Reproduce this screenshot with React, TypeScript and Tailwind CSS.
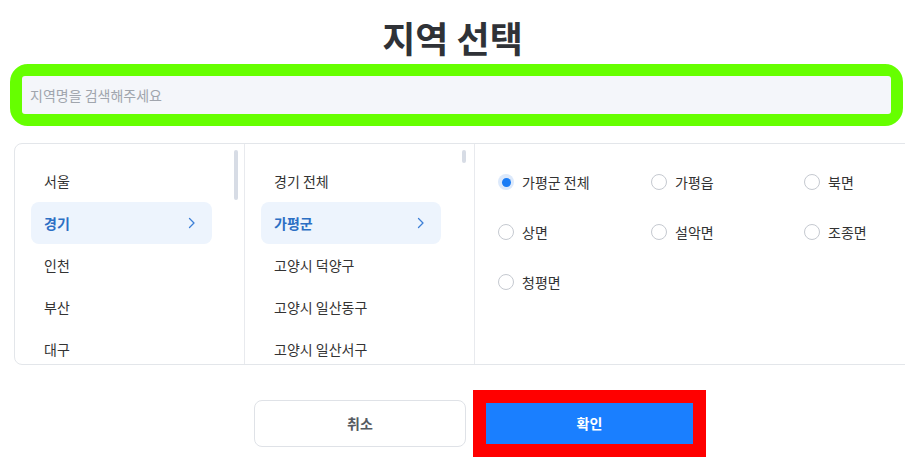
import React from "react";

const font = { fontFamily: '"Noto Sans CJK KR", "Noto Sans", sans-serif' };

function Chevron() {
  return (
    <svg width="8" height="12" viewBox="0 0 8 12" fill="none">
      <path d="M1.5 1.5L6 6L1.5 10.5" stroke="#3d7fd6" strokeWidth="1.3" strokeLinecap="round" strokeLinejoin="round" />
    </svg>
  );
}

function Radio({ checked, label }: { checked?: boolean; label: string }) {
  return (
    <div className="flex items-center gap-[8px] h-[50px]">
      {checked ? (
        <span className="w-[16px] h-[16px] rounded-full bg-[#dce9fb] flex items-center justify-center">
          <span className="w-[9px] h-[9px] rounded-full bg-[#1a7cf5]" />
        </span>
      ) : (
        <span className="w-[16px] h-[16px] rounded-full border border-[#c5c9d0] bg-white" />
      )}
      <span className="text-[14px] text-[#333]">{label}</span>
    </div>
  );
}

export default function App() {
  const col1 = ["서울", "경기", "인천", "부산", "대구"];
  const col2 = ["경기 전체", "가평군", "고양시 덕양구", "고양시 일산동구", "고양시 일산서구"];
  const radios = ["가평군 전체", "가평읍", "북면", "상면", "설악면", "조종면", "청평면"];
  return (
    <div className="w-[905px] h-[467px] bg-white overflow-hidden" style={font}>
      <div className="pt-[15px] h-[64px] text-center text-[36px] leading-[44px] font-bold text-[#2f3237]">
        지역 선택
      </div>
      <div className="ml-[10px] w-[893px] h-[62px] border-[12px] border-[#66ff00] rounded-[18px] bg-white">
        <div className="h-full bg-[#f4f6fa] rounded-[3px] flex items-center pl-[8px] text-[14px] text-[#a0a5ad]">
          지역명을 검색해주세요
        </div>
      </div>
      <div className="mt-[17px] ml-[14px] w-[910px] h-[222px] border border-[#e3e6ea] rounded-[8px] flex overflow-hidden">
        <div className="relative w-[229px] shrink-0 pl-[16px] pt-[16px]">
          {col1.map((t, i) => (
            <div
              key={t}
              className={
                i === 1
                  ? "w-[181px] h-[42px] rounded-[8px] bg-[#edf4fd] flex items-center justify-between pl-[13px] pr-[16px] text-[14px] font-bold text-[#2c6fc4]"
                  : "w-[181px] h-[42px] flex items-center pl-[13px] text-[14px] text-[#333]"
              }
            >
              <span>{t}</span>
              {i === 1 && <Chevron />}
            </div>
          ))}
          <div className="absolute left-[219px] top-[6px] w-[4px] h-[50px] rounded-full bg-[#d7dce5]" />
        </div>
        <div className="relative w-[230px] shrink-0 border-l border-[#e8eaee] pl-[16px] pt-[16px]">
          {col2.map((t, i) => (
            <div
              key={t}
              className={
                i === 1
                  ? "w-[180px] h-[42px] rounded-[8px] bg-[#edf4fd] flex items-center justify-between pl-[13px] pr-[16px] text-[14px] font-bold text-[#2c6fc4]"
                  : "w-[180px] h-[42px] flex items-center pl-[13px] text-[14px] text-[#333]"
              }
            >
              <span>{t}</span>
              {i === 1 && <Chevron />}
            </div>
          ))}
          <div className="absolute left-[217px] top-[6px] w-[4px] h-[13px] rounded-full bg-[#d7dce5]" />
        </div>
        <div className="flex-1 border-l border-[#e8eaee] pl-[23px] pt-[13px]">
          <div className="grid grid-cols-[153px_153px_153px]">
            {radios.map((r, i) => (
              <Radio key={r} label={r} checked={i === 0} />
            ))}
          </div>
        </div>
      </div>
      <div className="mt-[25px] pl-[254px] flex items-center gap-[7px]">
        <button className="w-[212px] h-[47px] rounded-[8px] border border-[#dfe2e7] bg-white text-[14px] font-bold text-[#555a61]">
          취소
        </button>
        <div className="border-[13px] border-[#ff0000] bg-[#ff0000]">
          <button className="block w-[207px] h-[41px] bg-[#1a7fff] text-[14px] font-bold text-white">
            확인
          </button>
        </div>
      </div>
    </div>
  );
}
